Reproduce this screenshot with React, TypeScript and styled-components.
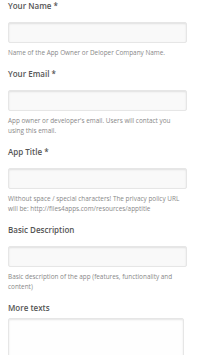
import styled, {createGlobalStyle} from "styled-components";

const GlobalStyle = createGlobalStyle`
  body {
    margin: 0;
    background: #ffffff;
    font-family: "Open Sans", "Liberation Sans", sans-serif;
  }
`;

interface Field {
    label: string,
    required?: boolean,
    help?: string,
    multiline?: boolean
}

const fields: Field[] = [
    {label: "Your Name", required: true, help: "Name of the App Owner or Deloper Company Name."},
    {label: "Your Email", required: true, help: "App owner or developer's email. Users will contact you using this email."},
    {label: "App Title", required: true, help: "Without space / special characters! The privacy policy URL will be: http://files4apps.com/resources/apptitle"},
    {label: "Basic Description", help: "Basic description of the app (features, functionality and content)"},
    {label: "More texts", multiline: true}
];

export default function App() {
    return (
        <>
            <GlobalStyle/>
            <Form>
                {fields.map(f => (
                    <Group key={f.label}>
                        <Label $tight={f.multiline}>
                            {f.label}{f.required && " *"}
                        </Label>
                        {f.multiline ? <TextArea/> : <Input type="text"/>}
                        {f.help && <Help>{f.help}</Help>}
                    </Group>
                ))}
            </Form>
        </>
    );
}

const Form = styled.form`
  display: flex;
  flex-direction: column;
  gap: 10px;
  padding: 0 13px 0 8px;
`;

const Group = styled.div`
  display: flex;
  flex-direction: column;
`;

const Label = styled.label<{ $tight?: boolean }>`
  font-size: 8px;
  line-height: 12px;
  font-weight: 600;
  color: #555;
  margin-bottom: ${p => p.$tight ? "4px" : "10px"};
`;

const Input = styled.input`
  box-sizing: border-box;
  height: 21px;
  width: 100%;
  border: 1px solid #e6e6e6;
  border-radius: 2px;
  background: #f9f9f9;
  box-shadow: inset 0 1px 2px rgba(0, 0, 0, 0.1);
  outline: none;
`;

const TextArea = styled.textarea`
  box-sizing: border-box;
  height: 60px;
  width: 176px;
  border: 1px solid #e6e6e6;
  border-radius: 2px;
  background: #fefefe;
  box-shadow: inset 0 1px 2px rgba(0, 0, 0, 0.1);
  resize: none;
  outline: none;
`;

const Help = styled.p`
  margin: 5px 0 0;
  font-size: 6.4px;
  line-height: 10px;
  color: #888;
`;
